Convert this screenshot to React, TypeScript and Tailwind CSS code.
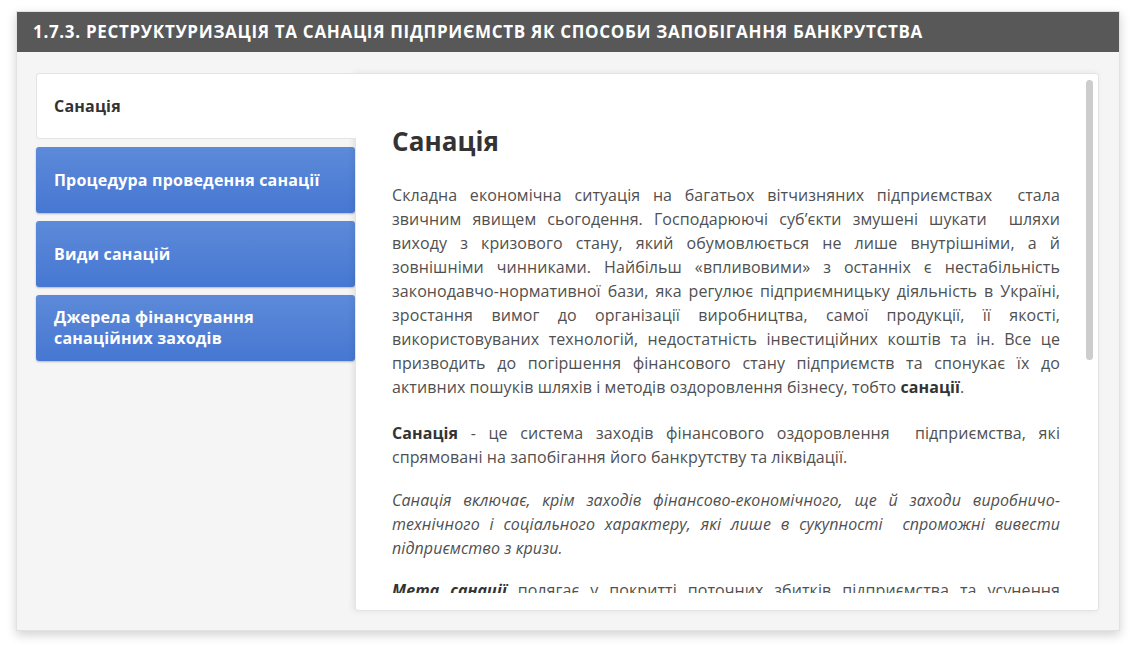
import React from 'react';

const tabs = [
  { id: 1, label: 'Санація', active: true },
  { id: 2, label: 'Процедура проведення санації', active: false },
  { id: 3, label: 'Види санацій', active: false },
  { id: 4, label: 'Джерела фінансування санаційних заходів', active: false },
];

export default function App() {
  return (
    <div className="min-h-screen bg-white pt-[11px] pl-[16px]" style={{ fontFamily: '"Open Sans", "Liberation Sans", sans-serif' }}>
      <div className="w-[1104px] h-[620px] bg-[#f5f5f5] border border-[#e2e2e2] shadow-[0_4px_10px_rgba(0,0,0,0.18)] flex flex-col">
        <div className="h-[40px] bg-[#585858] flex items-center px-[16px] shrink-0">
          <h1 className="text-white font-bold text-[17px] tracking-[0.68px] whitespace-nowrap">
            1.7.3. РЕСТРУКТУРИЗАЦІЯ ТА САНАЦІЯ ПІДПРИЄМСТВ ЯК СПОСОБИ ЗАПОБІГАННЯ БАНКРУТСТВА
          </h1>
        </div>

        <div className="flex pt-[21px] pl-[19px] pr-[20px] pb-[19px] flex-1 min-h-0">
          <div className="w-[319px] shrink-0 flex flex-col gap-[8px]">
            {tabs.map((t) =>
              t.active ? (
                <div
                  key={t.id}
                  className="h-[66px] bg-white border border-r-0 border-[#e4e4e4] rounded-l-[3px] flex items-center pl-[17px] text-[16px] tracking-[0.2px] font-bold text-[#333] -mr-[1px] relative z-10"
                >
                  {t.label}
                </div>
              ) : (
                <div
                  key={t.id}
                  className="h-[66px] rounded-[3px] bg-gradient-to-b from-[#5d8ad9] to-[#4677d2] flex items-center pl-[18px] pr-[24px] text-[16px] tracking-[0.2px] leading-[21px] font-bold text-white shadow-[0_1px_2px_rgba(0,0,0,0.25)]"
                >
                  {t.label}
                </div>
              )
            )}
          </div>

          <div className="flex-1 bg-white border border-[#e4e4e4] rounded-r-[3px] rounded-bl-[3px] shadow-[-2px_0_6px_rgba(0,0,0,0.08)] relative pb-[17px]">
            <div className="h-full overflow-hidden pl-[36px] pr-[38px] text-[16px] tracking-[0.08px] leading-[24px] text-[#505050] text-justify">
              <h2 className="pt-[51px] text-[26px] leading-[32px] font-bold text-[#333] mb-[26px]">Санація</h2>
              <p className="mb-[22px]">
                Складна економічна ситуація на багатьох вітчизняних підприємствах{'\u00a0'} стала звичним явищем сьогодення. Господарюючі суб’єкти змушені шукати{'\u00a0'} шляхи виходу з кризового стану, який обумовлюється не лише внутрішніми, а й зовнішніми чинниками. Найбільш «впливовими» з останніх є нестабільність законодавчо-нормативної бази, яка регулює підприємницьку діяльність в Україні, зростання вимог до організації виробництва, самої продукції, її якості, використовуваних технологій, недостатність інвестиційних коштів та ін. Все це призводить до погіршення фінансового стану підприємств та спонукає їх до активних пошуків шляхів і методів оздоровлення бізнесу, тобто <b className="text-[#333]">санації</b>.
              </p>
              <p className="mb-[19px]">
                <b className="text-[#333]">Санація</b> - це система заходів фінансового оздоровлення{'\u00a0'} підприємства, які спрямовані на запобігання його банкрутству та ліквідації.
              </p>
              <p className="mb-[18px] italic">
                Санація включає, крім заходів фінансово-економічного, ще й заходи виробничо-технічного і соціального характеру, які лише в сукупності{'\u00a0'} спроможні вивести підприємство з кризи.
              </p>
              <p>
                <b className="italic underline text-[#333]">Мета санації</b> полягає у покритті поточних збитків підприємства та усунення причин їх виникнення, поновленні або збереженні ліквідності і платоспроможності підприємства, скороченні всіх видів заборгованості, поліпшенні структури оборотного капіталу та формуванні фондів фінансових ресурсів, необхідних для проведення санаційних заходів.
              </p>
            </div>
            <div className="absolute right-[5px] top-[6px] w-[7px] h-[280px] rounded-full bg-[#cdcdcd]" />
          </div>
        </div>
      </div>
    </div>
  );
}
